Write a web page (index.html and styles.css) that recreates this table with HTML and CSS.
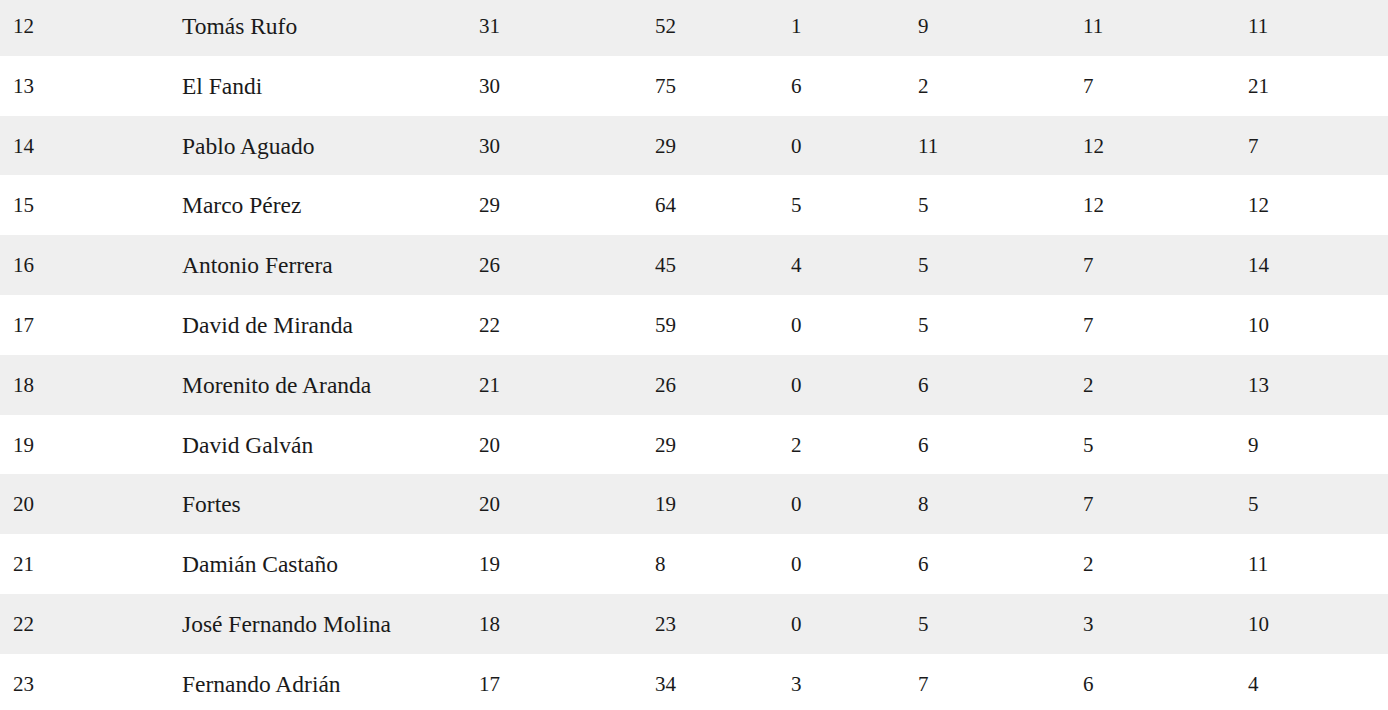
FILE: index.html
```html
<!DOCTYPE html>
<html lang="es">
<head>
<meta charset="utf-8">
<title>Escalafón</title>
<link rel="stylesheet" href="styles.css">
</head>
<body>
<table class="ranking">
  <colgroup>
    <col class="c1"><col class="c2"><col class="c3"><col class="c4"><col class="c5"><col class="c6"><col class="c7"><col class="c8">
  </colgroup>
  <tbody>
    <tr><td>12</td><td class="name">Tomás Rufo</td><td>31</td><td>52</td><td>1</td><td>9</td><td>11</td><td>11</td></tr>
    <tr><td>13</td><td class="name">El Fandi</td><td>30</td><td>75</td><td>6</td><td>2</td><td>7</td><td>21</td></tr>
    <tr><td>14</td><td class="name">Pablo Aguado</td><td>30</td><td>29</td><td>0</td><td>11</td><td>12</td><td>7</td></tr>
    <tr><td>15</td><td class="name">Marco Pérez</td><td>29</td><td>64</td><td>5</td><td>5</td><td>12</td><td>12</td></tr>
    <tr><td>16</td><td class="name">Antonio Ferrera</td><td>26</td><td>45</td><td>4</td><td>5</td><td>7</td><td>14</td></tr>
    <tr><td>17</td><td class="name">David de Miranda</td><td>22</td><td>59</td><td>0</td><td>5</td><td>7</td><td>10</td></tr>
    <tr><td>18</td><td class="name">Morenito de Aranda</td><td>21</td><td>26</td><td>0</td><td>6</td><td>2</td><td>13</td></tr>
    <tr><td>19</td><td class="name">David Galván</td><td>20</td><td>29</td><td>2</td><td>6</td><td>5</td><td>9</td></tr>
    <tr><td>20</td><td class="name">Fortes</td><td>20</td><td>19</td><td>0</td><td>8</td><td>7</td><td>5</td></tr>
    <tr><td>21</td><td class="name">Damián Castaño</td><td>19</td><td>8</td><td>0</td><td>6</td><td>2</td><td>11</td></tr>
    <tr><td>22</td><td class="name">José Fernando Molina</td><td>18</td><td>23</td><td>0</td><td>5</td><td>3</td><td>10</td></tr>
    <tr><td>23</td><td class="name">Fernando Adrián</td><td>17</td><td>34</td><td>3</td><td>7</td><td>6</td><td>4</td></tr>
  </tbody>
</table>
</body>
</html>
```

FILE: styles.css
```css
html, body {
  margin: 0;
  padding: 0;
  background: #ffffff;
}

body {
  font-family: "Liberation Serif", "DejaVu Serif", serif;
  color: #1a1a1a;
  overflow: hidden;
}

.ranking {
  width: 1388px;
  border-collapse: collapse;
  table-layout: fixed;
  margin-top: -4px;
}

.c1 { width: 169px; }
.c2 { width: 297px; }
.c3 { width: 176px; }
.c4 { width: 136px; }
.c5 { width: 127px; }
.c6 { width: 165px; }
.c7 { width: 165px; }
.c8 { width: 153px; }

.ranking tr {
  height: 59.8px;
}

.ranking tr:nth-child(odd) {
  background: #efefef;
}

.ranking td {
  padding: 2px 0 0 13px;
  font-size: 21px;
  line-height: 57.8px;
  vertical-align: middle;
  white-space: nowrap;
}

.ranking td.name {
  font-size: 23.5px;
}
```
